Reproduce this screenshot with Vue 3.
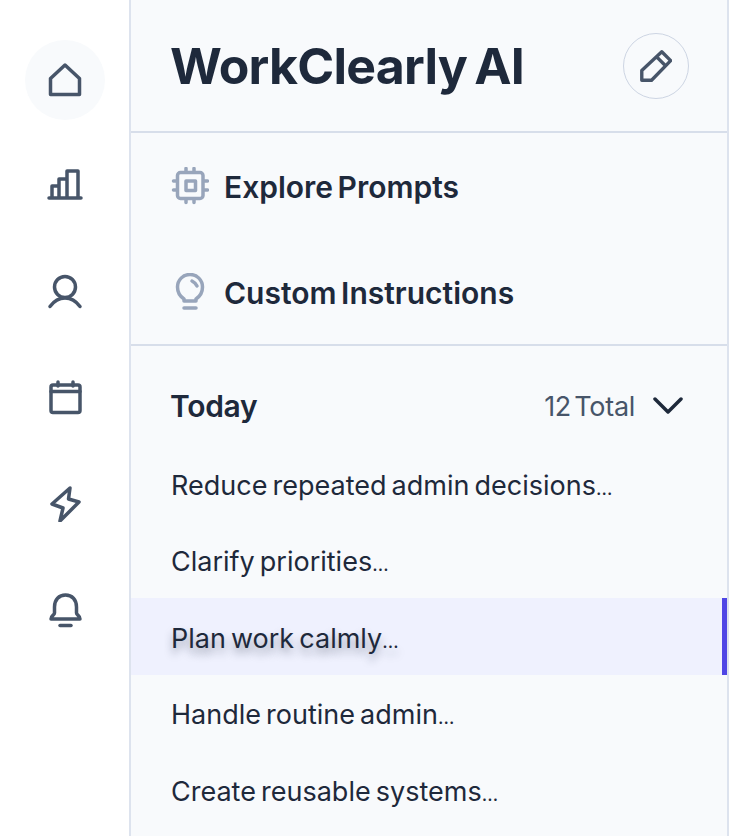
<script setup>
const items = [
  { label: 'Reduce repeated admin decisions' },
  { label: 'Clarify priorities' },
  { label: 'Plan work calmly', active: true },
  { label: 'Handle routine admin' },
  { label: 'Create reusable systems' },
];
</script>

<template>
  <div class="page">
    <nav class="rail">
      <button class="rail-btn current">
        <svg viewBox="0 0 36 36"><path d="M3.500 16.500 18 3 32.500 16.500V32.500H3.500Z" /></svg>
      </button>
      <button class="rail-btn">
        <svg viewBox="0 0 36 36">
          <path d="M2 30H34M5 30V18H12V30M12 30V11H20V30M20 30V3H31V30" />
        </svg>
      </button>
      <button class="rail-btn">
        <svg viewBox="0 0 36 36">
          <circle cx="18" cy="13" r="10.500" />
          <path d="M3 32.500C7 27 12 24 18 24S29 27 33 32.500" />
        </svg>
      </button>
      <button class="rail-btn">
        <svg viewBox="0 0 36 36">
          <rect x="4" y="5" width="29" height="27.500" rx="2" />
          <path d="M4 11.500H33M11 2V6M26 2V6" />
        </svg>
      </button>
      <button class="rail-btn">
        <svg viewBox="0 0 36 36"><path d="M23 2 5 18 16 22 13 35 32 16 21.500 13Z" /></svg>
      </button>
      <button class="rail-btn">
        <svg viewBox="0 0 36 36">
          <path d="M7.500 15C7.500 7.500 12 3 18.500 3S29.500 7.500 29.500 15V21C29.500 23 33 23.500 33 27H4C4 23.500 7.500 23 7.500 21Z" />
          <path d="M13 33.500H24" />
        </svg>
      </button>
    </nav>

    <aside class="panel">
      <header class="head">
        <h1>WorkClearly AI</h1>
        <button class="edit">
          <svg viewBox="0 0 36 36">
            <path d="M24.500 2 34.500 12 13 34H2V23ZM19 8 29 18" />
          </svg>
        </button>
      </header>

      <section class="links">
        <a class="link">
          <svg viewBox="0 0 38 38">
            <rect x="6.500" y="5.500" width="25.500" height="26" rx="3" />
            <rect x="15" y="14" width="9.500" height="9.500" />
            <path d="M15 1.500V5M23 1.500V5M15 32V35.500M23 32V35.500M2.500 14H6M2.500 23H6M33 14H36.500M33 23H36.500" />
          </svg>
          <span>Explore Prompts</span>
        </a>
        <a class="link">
          <svg viewBox="0 0 38 38">
            <path d="M13 26C8.500 23 6.500 19 6.500 14 6.500 7 12 1.500 19 1.500S31.500 7 31.500 14C31.500 19 29.500 23 25 26V28H13Z" />
            <path d="M13 35H25M21 8C23 9 25 11 26 13" />
          </svg>
          <span>Custom Instructions</span>
        </a>
      </section>

      <section class="today">
        <div class="today-head">
          <h2>Today</h2>
          <span class="total">12 Total</span>
          <svg class="chev" viewBox="0 0 30 18"><path d="M2 2 15 15 28 2" /></svg>
        </div>
        <ul>
          <li v-for="item in items" :key="item.label" :class="{ active: item.active }">
            <span>{{ item.label }}<span class="dots">…</span></span>
          </li>
        </ul>
      </section>
    </aside>
  </div>
</template>

<style>
html, body {
  margin: 0;
  background: #fff;
  overflow: hidden;
}
</style>

<style scoped>
.page {
  display: flex;
  width: 732px;
  height: 836px;
  overflow: hidden;
  font-family: Inter, "Liberation Sans", sans-serif;
  color: #1e293b;
}

.rail {
  width: 129px;
  flex: none;
  display: flex;
  flex-direction: column;
  align-items: center;
  gap: 26px;
  padding: 40px 0 0;
  box-sizing: border-box;
}

.rail-btn {
  width: 80px;
  height: 80px;
  border: none;
  padding: 0;
  background: none;
  border-radius: 50%;
  display: flex;
  align-items: center;
  justify-content: center;
}

.rail-btn.current {
  background: #f8fafc;
}

.rail-btn svg {
  width: 36px;
  height: 36px;
  fill: none;
  stroke: #475569;
  stroke-width: 3.5;
  stroke-linecap: round;
  stroke-linejoin: round;
}

.panel {
  width: 600px;
  flex: none;
  box-sizing: border-box;
  background: #f8fafc;
  border-left: 2px solid #dde3ee;
  border-right: 2px solid #dde3ee;
}

.head {
  height: 133px;
  box-sizing: border-box;
  border-bottom: 2px solid #d7deea;
  padding: 0 38px 0 40px;
  display: flex;
  align-items: center;
  justify-content: space-between;
}

h1 {
  margin: 0 0 0 -1px;
  font-size: 50px;
  font-weight: 700;
  letter-spacing: -0.75px;
  word-spacing: -4px;
  color: #1e293b;
}

.edit {
  width: 66px;
  height: 66px;
  border: 1.5px solid #cdd5e3;
  border-radius: 50%;
  background: none;
  padding: 0;
  display: flex;
  align-items: center;
  justify-content: center;
}

.edit svg {
  width: 32px;
  height: 32px;
  fill: none;
  stroke: #475569;
  stroke-width: 3.8;
  stroke-linejoin: round;
}

.links {
  border-bottom: 2px solid #d7deea;
  height: 213px;
  box-sizing: border-box;
}

.link {
  height: 106px;
  display: flex;
  align-items: center;
  gap: 15px;
  padding-left: 40px;
  font-size: 30px;
  font-weight: 600;
  word-spacing: -3px;
}

.link span {
  padding-top: 2px;
}

.link svg {
  width: 38px;
  height: 38px;
  flex: none;
  fill: none;
  stroke: #98a5bb;
  stroke-width: 3.5;
  stroke-linecap: round;
  stroke-linejoin: round;
}

.today-head {
  height: 46px;
  display: flex;
  align-items: center;
  padding: 37px 44px 16px 39px;
}

h2 {
  margin: 0;
  flex: 1;
  font-size: 30px;
  font-weight: 600;
  letter-spacing: -0.3px;
}

.total {
  font-size: 27px;
  color: #475569;
  letter-spacing: -0.3px;
  word-spacing: -4px;
}

.chev {
  width: 30px;
  height: 18px;
  margin-left: 18px;
  fill: none;
  stroke: #1e293b;
  stroke-width: 3.5;
  stroke-linecap: round;
  stroke-linejoin: round;
}

ul {
  list-style: none;
  margin: 0;
  padding: 0;
}

li {
  height: 76.5px;
  display: flex;
  align-items: center;
  padding: 4px 0 0 40px;
  box-sizing: border-box;
  font-size: 27px;
  word-spacing: -2.5px;
}

.dots {
  font-size: 19px;
}

li.active {
  background: #eff1fe;
  border-right: 5px solid #4f46e5;
  text-shadow: 0 6px 8px rgba(30, 41, 59, 0.4);
}
</style>
